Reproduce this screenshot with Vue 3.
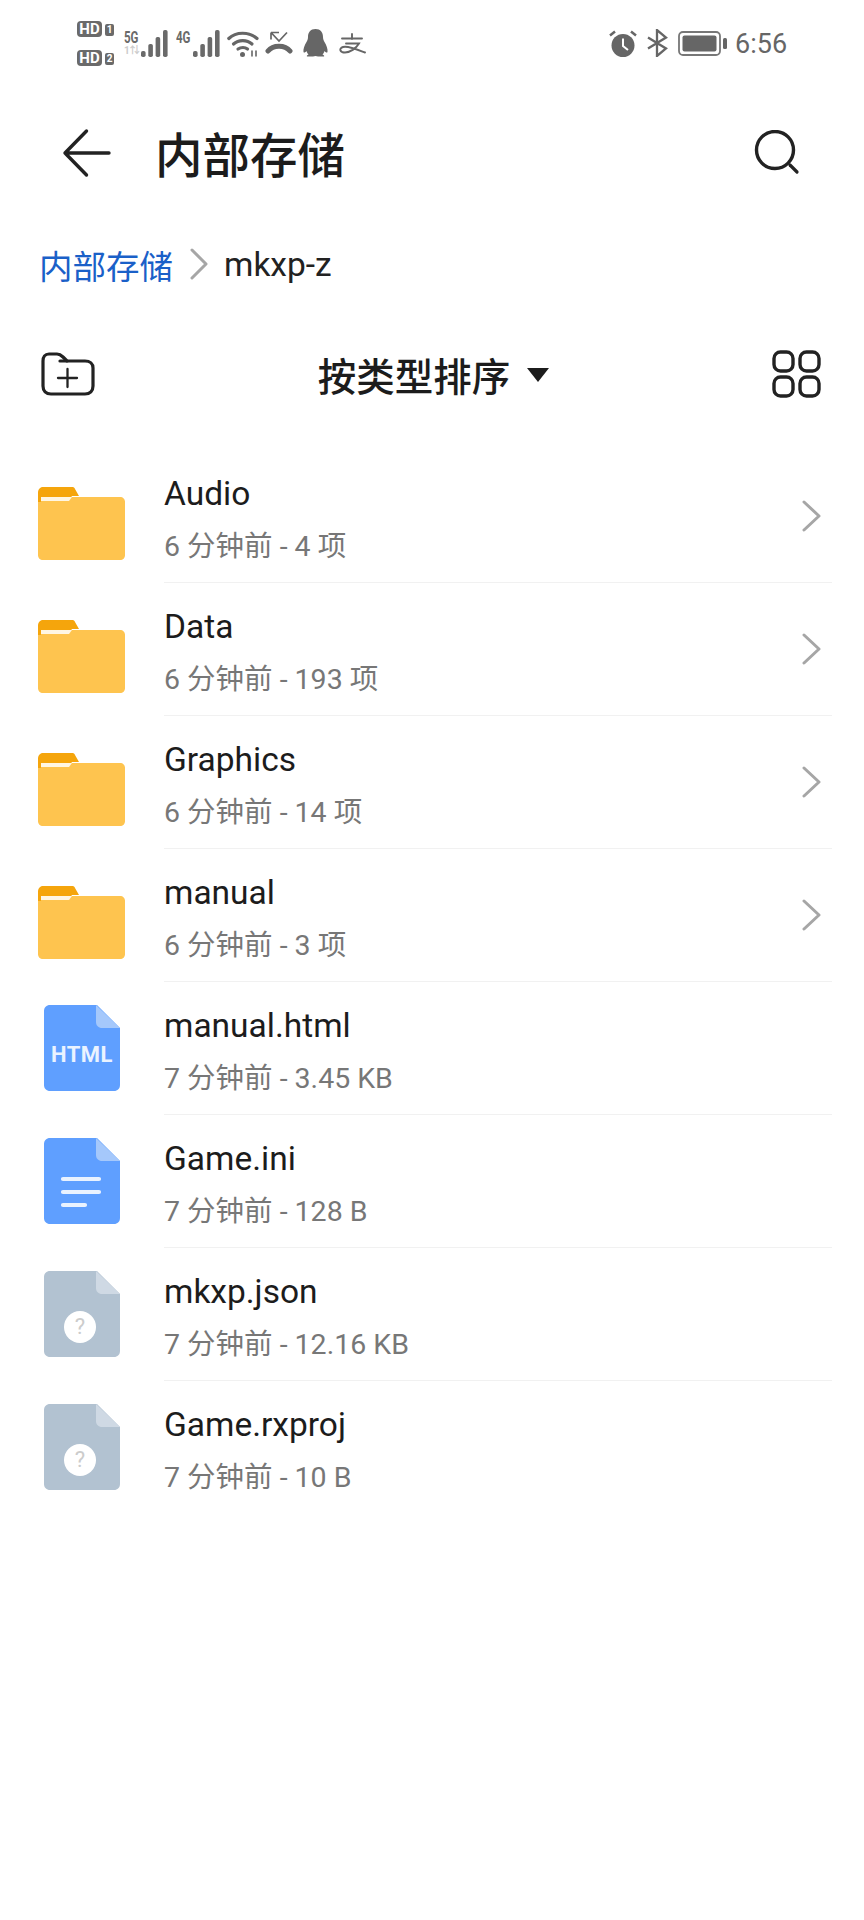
<template>
  <div class="page">
    <div class="statusbar">
      <div class="status-left">
        <div class="sims">
          <div class="sim"><span class="hd">HD</span><span class="num">1</span></div>
          <div class="sim"><span class="hd">HD</span><span class="num">2</span></div>
        </div>
        <div class="net">
          <div class="net-label"><span class="gen">5G</span><span class="dim">1⇅</span></div>
          <svg width="27" height="27" viewBox="0 0 27 27"><rect v-for="b in bars" :key="b.x" :x="b.x" :y="b.y" width="4.600" :height="27 - b.y" rx="1.800" fill="#6a6a6a" /></svg>
        </div>
        <div class="net net-4g">
          <div class="net-label"><span class="gen">4G</span></div>
          <svg width="27" height="27" viewBox="0 0 27 27"><rect v-for="b in bars" :key="b.x" :x="b.x" :y="b.y" width="4.600" :height="27 - b.y" rx="1.800" fill="#6a6a6a" /></svg>
        </div>
        <svg class="s-wifi" width="33" height="27" viewBox="0 0 33 27" fill="none" stroke="#666" stroke-width="3.200" stroke-linecap="round">
          <path d="M1.800 8.500C9 1.500 22 1.500 30 8.500" />
          <path d="M6.500 14C11.500 9.500 20 9.500 25 14" />
          <path d="M11 19C14 17 18 17 20.500 19" />
          <circle cx="15.500" cy="24.500" r="2.500" fill="#666" stroke="none" />
          <path d="M25 21v5M29 21v5" stroke-width="1.600" />
        </svg>
        <svg class="s-call" width="28" height="24" viewBox="0 0 28 24" fill="none" stroke="#666" stroke-linecap="round">
          <path d="M6 1.500v7M6 1.500h8M6.500 2l7.500 8 8-8.500" stroke-width="1.700" stroke-linecap="butt" />
          <path d="M3 20C8 13.500 20 13.500 25 20" stroke-width="5" />
        </svg>
        <svg class="s-qq" width="25" height="28" viewBox="0 0 25 28">
          <path d="M12.500 0C7.500 0 5 3.500 5 8c0 2-.5 3-1.500 5C1.500 16.500 0 20 .5 23c.5 1 2 .5 3-1 .5 1.500 1 2.500 2 3.500-1.500.5-2 1.500-1.500 2h6l2.500-.5 2.500.5h6c.5-.5 0-1.500-1.500-2 1-1 1.500-2 2-3.500 1 1.500 2.500 2 3 1 .5-3-1-6.500-3-10C20.500 11 20 10 20 8c0-4.500-2.500-8-7.500-8z" fill="#666" />
        </svg>
        <svg class="s-ali" width="28" height="21" viewBox="0 0 28 21" fill="none" stroke="#666" stroke-width="1.900" stroke-linecap="round">
          <path d="M4 5.500h20M14 1v5M8 10.500h13c-3 5-9 9-14 9-5 0-6.500-4-2-5.500 5-1.500 13 2 22 5.500" />
        </svg>
      </div>
      <div class="status-right">
        <svg width="28" height="27" viewBox="0 0 28 27">
          <circle cx="14" cy="15.500" r="11.500" fill="#666" />
          <path d="M14 8.500v7.500l5 4" fill="none" stroke="#fff" stroke-width="2" />
          <path d="M1 5.500L6 1.500M27 5.500L22 1.500" stroke="#666" stroke-width="2.500" />
        </svg>
        <svg width="21" height="28" viewBox="0 0 21 28" fill="none" stroke="#666" stroke-width="2.300">
          <path d="M1 8.500l18 11-9 7.500V1l9 7.500-18 11" />
        </svg>
        <svg width="49" height="25" viewBox="0 0 49 25">
          <rect x="1" y="1" width="41" height="23" rx="4" fill="none" stroke="#777" stroke-width="1.800" />
          <rect x="4.500" y="4.500" width="34" height="16" rx="2" fill="#666" />
          <rect x="45" y="7" width="4" height="11" rx="1.500" fill="#666" />
        </svg>
        <span class="time">6:56</span>
      </div>
    </div>

    <header class="appbar">
      <svg class="back" width="50" height="50" viewBox="0 0 50 50" fill="none" stroke="#222" stroke-width="3.400" stroke-linecap="round" stroke-linejoin="round">
        <path d="M24.500 3L3 25l21.500 22M3 25h44" />
      </svg>
      <h1 class="title">内部存储</h1>
      <svg class="search" width="46" height="46" viewBox="0 0 46 46" fill="none" stroke="#222" stroke-linecap="round">
        <circle cx="21" cy="20" r="18.500" stroke-width="3.400" />
        <path d="M36 35l7 7" stroke-width="3.200" />
      </svg>
    </header>

    <nav class="crumbs">
      <span class="crumb-root">内部存储</span>
      <svg width="18" height="32" viewBox="0 0 18 32" fill="none" stroke="#a6a6a6" stroke-width="3" stroke-linecap="round" stroke-linejoin="round">
        <path d="M2 2l14 14L2 30" />
      </svg>
      <span class="crumb-cur">mkxp-z</span>
    </nav>

    <div class="toolbar">
      <svg class="tool-new" width="54" height="44" viewBox="0 0 54 44" fill="none" stroke="#222" stroke-width="3.200" stroke-linecap="round" stroke-linejoin="round">
        <path d="M2 9c0-4 2-7 6-7h8c3 0 4 1 6 3l4 4h18c5 0 8 3 8 7v18c0 5-3 8-8 8H10c-5 0-8-3-8-8z" />
        <path d="M19 9h7" />
        <path d="M17 26h19M26.500 17v18" stroke-width="2.300" />
      </svg>
      <div class="sort">
        <span>按类型排序</span>
        <i class="caret"></i>
      </div>
      <svg class="tool-grid" width="49" height="48" viewBox="0 0 49 48" fill="none" stroke="#222" stroke-width="3.400">
        <rect x="2" y="2" width="19" height="19" rx="6.500" />
        <rect x="28" y="2" width="19" height="19" rx="6.500" />
        <rect x="2" y="27" width="19" height="19" rx="6.500" />
        <rect x="28" y="27" width="19" height="19" rx="6.500" />
      </svg>
    </div>

    <ul class="list">
      <li v-for="(f, i) in files" :key="f.name" class="row">
        <div class="thumb">
          <svg v-if="f.kind === 'folder'" width="87" height="73" viewBox="0 0 87 73">
            <path d="M0 16c0-3 1-6 3-6h79c3 0 5 2 5 5v53c0 3-2 5-5 5H5c-3 0-5-2-5-5z" fill="#fec44f" />
            <path d="M0 6c0-3.500 2-6 5-6h29c1.500 0 2.500 .5 3 2l4 7H34l-3 4H3v2H0z" fill="#f5a50c" />
            <path d="M3 10h31l-3 4H3z" fill="#fff6e3" />
          </svg>
          <svg v-else width="76" height="86" viewBox="0 0 76 86" class="doc">
            <path d="M6 0h47l23 23v57c0 3.500-2.500 6-6 6H6c-3.500 0-6-2.500-6-6V6c0-3.500 2.500-6 6-6z" :fill="f.kind === 'unknown' ? '#b2c2d1' : '#5f9fff'" />
            <path d="M52 0l24 23H58c-3.500 0-6-2.500-6-6z" :fill="f.kind === 'unknown' ? '#cfd9e4' : '#a5c8fb'" />
            <g v-if="f.kind === 'text'" stroke="#e9f2ff" stroke-width="4.200" stroke-linecap="round">
              <path d="M19 41h36M19 54h36M19 67h22" />
            </g>
            <circle v-if="f.kind === 'unknown'" cx="36" cy="56" r="16" fill="#fff" />
          </svg>
          <span v-if="f.kind === 'html'" class="doc-label">HTML</span>
          <span v-if="f.kind === 'unknown'" class="doc-q">?</span>
        </div>
        <div class="body" :class="{ last: i === files.length - 1 }">
          <div class="text">
            <div class="name">{{ f.name }}</div>
            <div class="meta">{{ f.meta }}</div>
          </div>
          <svg v-if="f.kind === 'folder'" class="chev" width="19" height="32" viewBox="0 0 19 32" fill="none" stroke="#a6a6a6" stroke-width="3" stroke-linecap="round" stroke-linejoin="round">
            <path d="M2 2l15 14L2 30" />
          </svg>
        </div>
      </li>
    </ul>
  </div>
</template>

<script setup>
const bars = [
  { x: 0, y: 21 },
  { x: 7.300, y: 14 },
  { x: 14.600, y: 7 },
  { x: 22, y: 0 },
];

const files = [
  { name: "Audio", meta: "6 分钟前 - 4 项", kind: "folder" },
  { name: "Data", meta: "6 分钟前 - 193 项", kind: "folder" },
  { name: "Graphics", meta: "6 分钟前 - 14 项", kind: "folder" },
  { name: "manual", meta: "6 分钟前 - 3 项", kind: "folder" },
  { name: "manual.html", meta: "7 分钟前 - 3.45 KB", kind: "html" },
  { name: "Game.ini", meta: "7 分钟前 - 128 B", kind: "text" },
  { name: "mkxp.json", meta: "7 分钟前 - 12.16 KB", kind: "unknown" },
  { name: "Game.rxproj", meta: "7 分钟前 - 10 B", kind: "unknown" },
];
</script>

<style>
html, body {
  margin: 0;
  background: #fff;
}
</style>

<style scoped>
.page {
  width: 864px;
  height: 1920px;
  overflow: hidden;
  background: #fff;
  color: #1c1c1c;
  font-family: Roboto, "Noto Sans CJK SC", sans-serif;
}

/* status bar */
.statusbar {
  height: 86px;
  padding: 0 77px;
  box-sizing: border-box;
  display: flex;
  justify-content: space-between;
  align-items: center;
  color: #666;
}
.status-left, .status-right {
  display: flex;
  align-items: center;
}
.status-right { gap: 10px; }
.sims {
  display: flex;
  flex-direction: column;
  gap: 13px;
  width: 47px;
}
.sim { display: flex; align-items: center; gap: 3px; }
.hd {
  width: 25px;
  height: 16px;
  border-radius: 4px;
  background: #6a6a6a;
  color: #fff;
  font-size: 15px;
  font-weight: 700;
  line-height: 16px;
  text-align: center;
}
.num {
  width: 9px;
  height: 12px;
  margin-top: 3px;
  border-radius: 2px;
  background: #6a6a6a;
  color: #fff;
  font-size: 10px;
  font-weight: 700;
  line-height: 12px;
  text-align: center;
}
.net {
  display: flex;
  align-items: flex-end;
  width: 44px;
  height: 27px;
  margin-right: 8px;
}
.net svg { flex: none; margin-left: -2px; }
.net-4g { margin-right: 7px; }
.net-label {
  display: flex;
  flex-direction: column;
  flex: none;
  width: 19px;
  height: 27px;
  font-size: 16px;
  line-height: 15px;
  font-weight: 700;
  color: #6a6a6a;
}
.gen {
  display: block;
  transform: scaleX(0.72);
  transform-origin: left;
}
.dim { color: #ccc; font-size: 10px; line-height: 12px; }
.s-wifi { margin-right: 5px; }
.s-call { margin-right: 10px; }
.s-qq { margin-right: 10px; }
.time {
  font-size: 27px;
  line-height: 30px;
  color: #666;
  margin: 2px 0 0 -2px;
  width: 52px;
  white-space: nowrap;
}

/* app bar */
.appbar {
  height: 92px;
  margin-top: 21px;
  margin-right: 64px;
  padding-left: 62px;
  display: flex;
  align-items: center;
}
.back { flex: none; }
.title {
  margin: 0 0 0 43px;
  flex: 1;
  font-size: 47.500px;
  font-weight: 500;
  line-height: 60px;
  font-family: "Noto Sans CJK SC", sans-serif;
  color: #1c1c1c;
}

/* breadcrumb */
.crumbs {
  height: 56px;
  margin-top: 37px;
  padding-left: 39px;
  display: flex;
  align-items: center;
  font-size: 33.500px;
}
.crumb-root {
  color: #1a60c8;
  font-family: "Noto Sans CJK SC", sans-serif;
  margin-right: 17px;
}
.crumb-cur { margin-left: 16px; color: #222; }

/* toolbar */
.toolbar {
  height: 60px;
  margin-top: 52px;
  padding: 0 43px 0 41px;
  display: flex;
  align-items: center;
  justify-content: space-between;
}
.sort {
  display: flex;
  align-items: center;
  gap: 17px;
  font-size: 38.500px;
  font-weight: 500;
  font-family: "Noto Sans CJK SC", sans-serif;
}
.caret {
  width: 0;
  height: 0;
  border-left: 11px solid transparent;
  border-right: 11px solid transparent;
  border-top: 14px solid #1c1c1c;
  margin-top: 2px;
}

/* list */
.list {
  list-style: none;
  margin: 46px 0 0;
  padding: 0;
}
.row {
  display: flex;
  height: 133px;
}
.thumb {
  position: relative;
  flex: none;
  width: 164px;
  box-sizing: border-box;
  padding-left: 38px;
  padding-top: 37px;
}
.thumb .doc {
  display: block;
  margin: -14px 0 0 6px;
}
.doc-label {
  position: absolute;
  left: 44px;
  width: 76px;
  top: 61px;
  text-align: center;
  color: #eaf3ff;
  font-size: 22px;
  font-weight: 700;
  line-height: 24px;
  letter-spacing: 0.5px;
}
.doc-q {
  position: absolute;
  left: 64px;
  width: 32px;
  top: 63px;
  text-align: center;
  color: #ccc;
  font-size: 22px;
  line-height: 32px;
}
.body {
  flex: 1;
  margin-right: 32px;
  padding-right: 11px;
  display: flex;
  align-items: center;
  justify-content: space-between;
  border-bottom: 1px solid #f1f1f1;
  box-sizing: border-box;
}
.body.last { border-bottom: 0; }
.text { padding-top: 6px; }
.name {
  font-size: 33.500px;
  line-height: 40px;
  color: #1c1c1c;
}
.meta {
  margin-top: 15px;
  font-size: 28.500px;
  line-height: 36px;
  color: #777;
}
</style>
